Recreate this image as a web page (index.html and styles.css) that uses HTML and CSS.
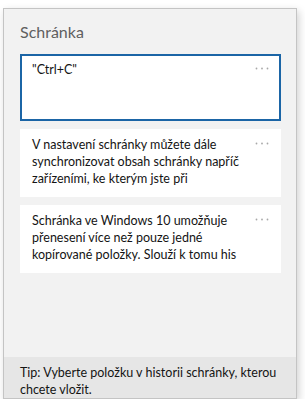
FILE: index.html
```html
<!DOCTYPE html>
<html>
<head>
    <title>Schránka</title>
    <link rel="stylesheet" href="styles.css">
</head>
<body>
    <div class="panel">
        <div class="panel-title">Schránka</div>

        <div class="clip-list">
            <div class="clip selected">
                <div class="clip-text">"Ctrl+C"</div>
                <svg class="clip-more" width="14" height="3" viewBox="0 0 14 3"><circle cx="1.5" cy="1.5" r="0.9"/><circle cx="7" cy="1.5" r="0.9"/><circle cx="12.5" cy="1.5" r="0.9"/></svg>
            </div>
            <div class="clip">
                <div class="clip-text">V nastavení schránky můžete dále synchronizovat obsah schránky napříč zařízeními, ke kterým jste při</div>
                <svg class="clip-more" width="14" height="3" viewBox="0 0 14 3"><circle cx="1.5" cy="1.5" r="0.9"/><circle cx="7" cy="1.5" r="0.9"/><circle cx="12.5" cy="1.5" r="0.9"/></svg>
            </div>
            <div class="clip">
                <div class="clip-text">Schránka ve Windows 10 umožňuje přenesení více než pouze jedné kopírované položky. Slouží k tomu his</div>
                <svg class="clip-more" width="14" height="3" viewBox="0 0 14 3"><circle cx="1.5" cy="1.5" r="0.9"/><circle cx="7" cy="1.5" r="0.9"/><circle cx="12.5" cy="1.5" r="0.9"/></svg>
            </div>
        </div>

        <div class="panel-tip">Tip: Vyberte položku v historii schránky, kterou chcete vložit.</div>
    </div>
</body>
</html>
```

FILE: styles.css
```css
body { margin: 0; background: #fff; font-family: Lato, "Noto Sans", sans-serif; }
.panel {
    margin: 8px 0 0 3px;
    width: 292px;
    height: 389px;
    border: 1px solid #c4c4c4;
    background: #f2f2f2;
    box-shadow: 2px 3px 8px rgba(0, 0, 0, 0.18);
    display: flex;
    flex-direction: column;
}
.panel-title {
    padding: 13px 0 0 16px;
    height: 45px;
    box-sizing: border-box;
    font-size: 16px;
    line-height: 20px;
    color: #5f5f5f;
}
.clip-list {
    flex: 1;
    padding: 0 15px 0 16px;
    display: flex;
    flex-direction: column;
    gap: 8px;
}
.clip {
    background: #fff;
    height: 68px;
    padding: 0 24px 0 12px;
    position: relative;
    box-sizing: border-box;
}
.clip.selected {
    border: 2px solid #1b65a6;
    padding: 0 22px 0 10px;
    height: 67px;
}
.clip-text {
    padding-top: 7px;
    font-size: 12.5px;
    line-height: 17px;
    color: #141414;
}
.clip.selected .clip-text { padding-top: 5px; }
.clip-more {
    position: absolute;
    top: 13px;
    right: 12px;
    fill: #a8a8a8;
}
.clip.selected .clip-more { top: 11px; right: 10px; }
.panel-tip {
    background: #e6e6e6;
    height: 41px;
    padding: 7px 16px 0 16px;
    box-sizing: border-box;
    font-size: 12.5px;
    line-height: 17px;
    color: #141414;
}
```
